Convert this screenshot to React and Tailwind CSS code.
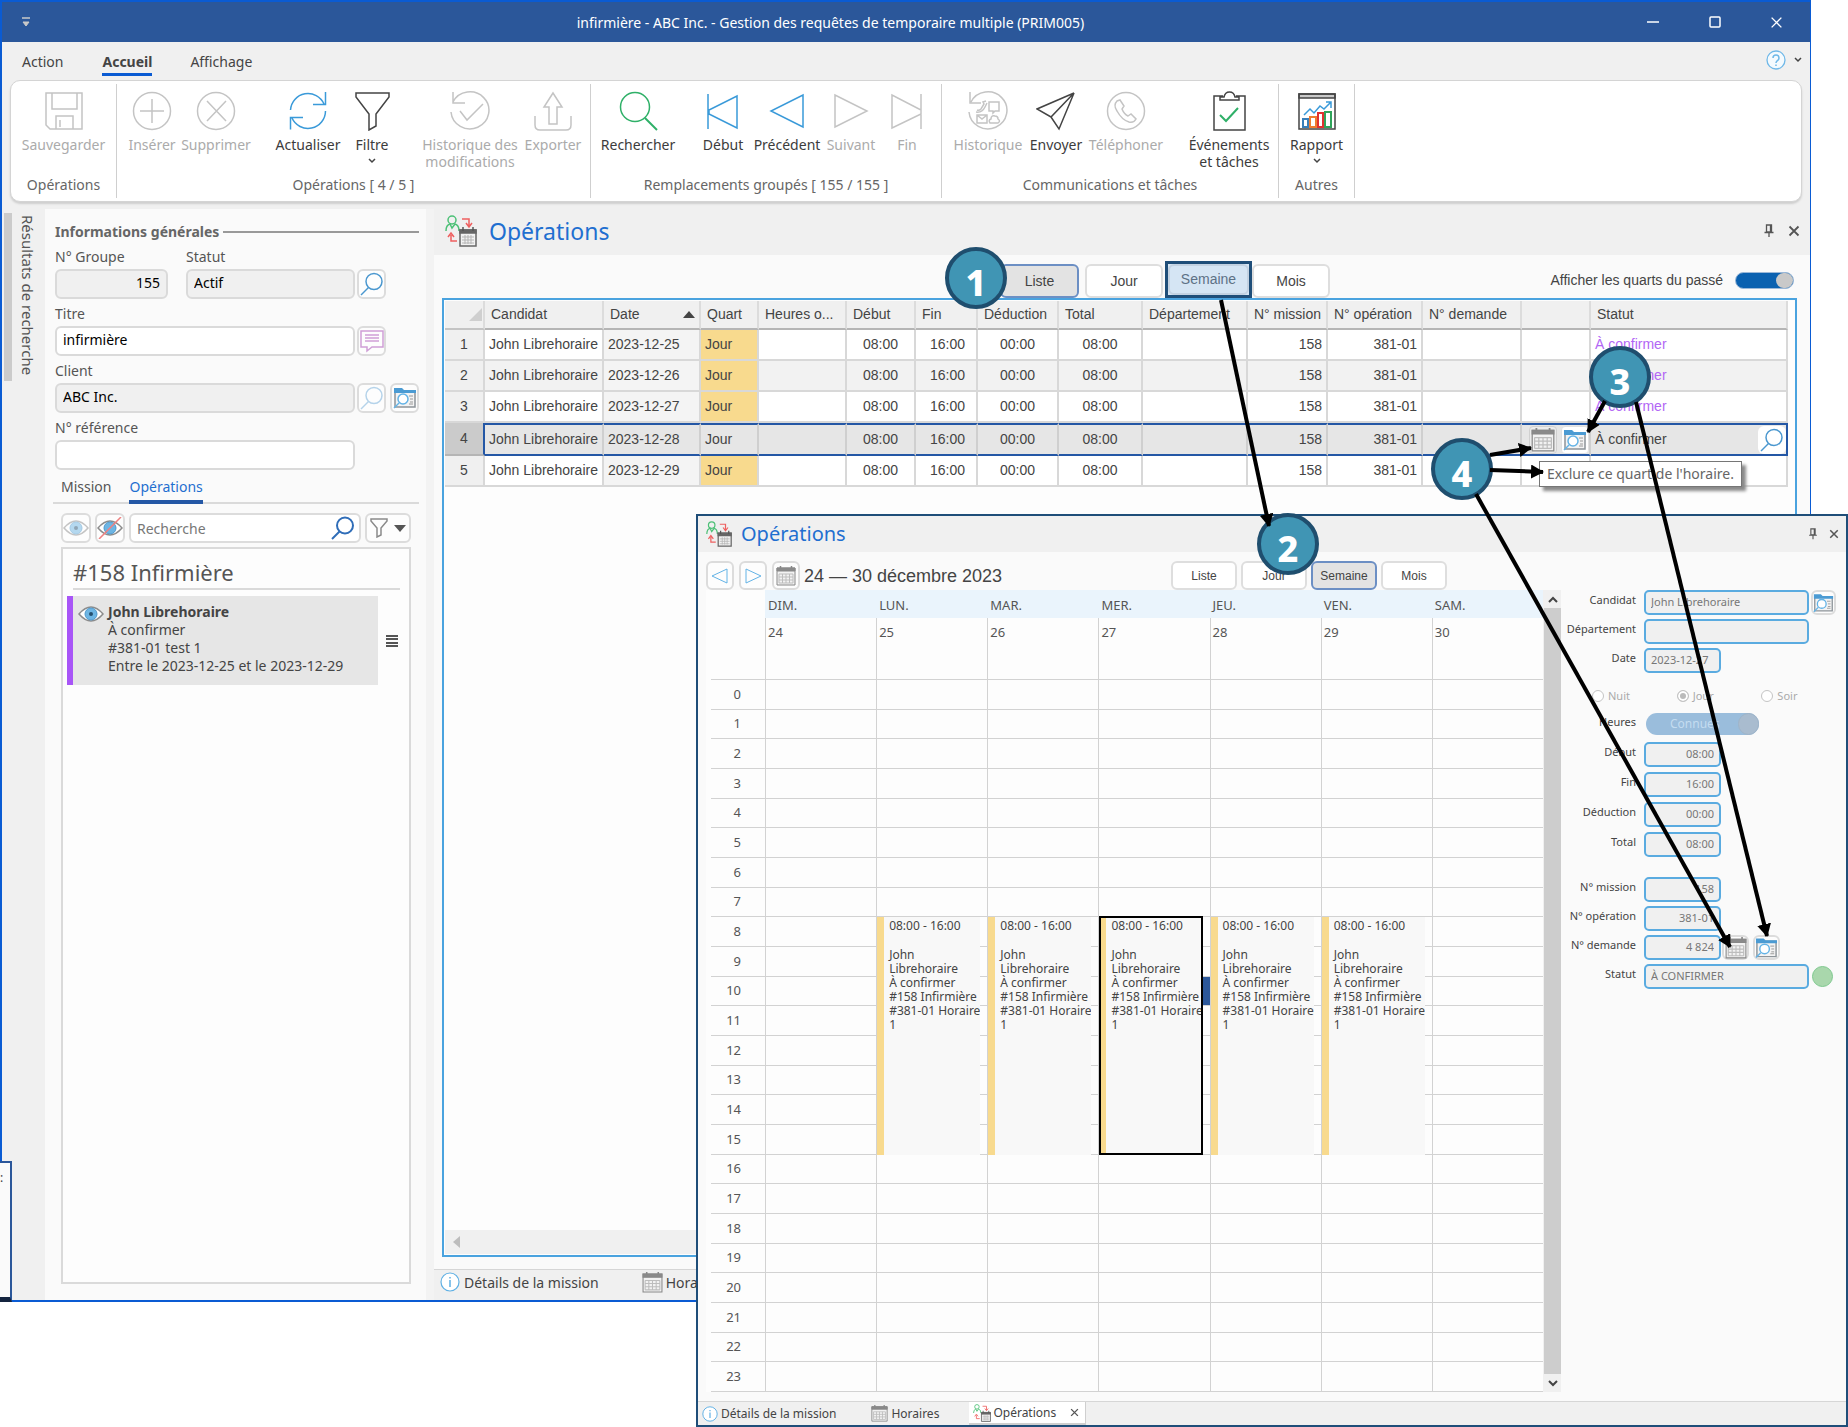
import React, { useState } from 'react';
import { clsx } from 'clsx';

const GREY = '#c4c4c4';
const BLUE = '#3a9ad9';
const DARK = '#444444';

/* ---------- Icons ---------- */

const RibbonIcon = ({ color = DARK, children }) => (
  <svg width="40" height="40" viewBox="0 0 40 40" fill="none" stroke={color} strokeWidth="1.5">
    {children}
  </svg>
);

const SaveIcon = () => (
  <RibbonIcon color={GREY}>
    <path d="M2 2h36v36H6l-4-4zM8 2v16h25V2M12 38V25h17v13M16 29v7" />
  </RibbonIcon>
);

const InsertIcon = () => (
  <RibbonIcon color={GREY}>
    <circle cx="20" cy="20" r="18.5" />
    <path d="M20 8v24M8 20h24" />
  </RibbonIcon>
);

const DeleteIcon = () => (
  <RibbonIcon color={GREY}>
    <circle cx="20" cy="20" r="18.5" />
    <path d="M11 10l19 20M30 10L11 30" />
  </RibbonIcon>
);

const RefreshIcon = () => (
  <RibbonIcon color={BLUE}>
    <path d="M2.500 19A17.500 17.500 0 0 1 36 13M37.500 1v12.500H25M37.500 20A17.500 17.500 0 0 1 4 27M2.500 38.500V26.500H15" />
  </RibbonIcon>
);

const FunnelIcon = () => (
  <RibbonIcon>
    <path d="M4 2h33v4L24 23v12l-7 4V23L4 6z" />
  </RibbonIcon>
);

const HistoryIcon = () => (
  <RibbonIcon color={GREY}>
    <path d="M3 11A19 18.500 0 1 1 1 21M3 1v11h12M10 20l7 9 16-16" />
  </RibbonIcon>
);

const ExportIcon = () => (
  <RibbonIcon color={GREY}>
    <path d="M20 2l9 14h-5v17h-8V16h-5zM2 25v9q0 5 5 5h26q5 0 5-5v-9" />
  </RibbonIcon>
);

const SearchBigIcon = () => (
  <RibbonIcon color="#2fb068">
    <circle cx="17" cy="16" r="14.500" />
    <path d="M27 27l12 12" strokeWidth="2" />
  </RibbonIcon>
);

const FirstIcon = () => (
  <RibbonIcon color={BLUE}>
    <path d="M5 3v35M34 5v32L6 23v-4z" />
  </RibbonIcon>
);

const PrevIcon = () => (
  <RibbonIcon color={BLUE}>
    <path d="M36 4v32L4 20z" />
  </RibbonIcon>
);

const NextIcon = () => (
  <RibbonIcon color={GREY}>
    <path d="M4 4v32l32-16z" />
  </RibbonIcon>
);

const LastIcon = () => (
  <RibbonIcon color={GREY}>
    <path d="M34 3v35M5 4v33l29-14v-4z" />
  </RibbonIcon>
);

const CommHistoryIcon = () => (
  <RibbonIcon color={GREY}>
    <path d="M3 11A19 18.500 0 1 1 1 21M2 1v11h11" />
    <path d="M21 11h10v9h-4l-2 2v-2h-4zM9 24h10v8H9zM9 24l5 4 5-4M22 32q-2-3 1-4 0-4 4-3 3 0 3 3 3 2 0 4zM9 19q2 1 4-1l3-5-1-2 3-1M8 21q6 1 9-5l2-4" />
  </RibbonIcon>
);

const SendIcon = () => (
  <RibbonIcon>
    <path d="M38 2L1 18l14 8zM38 2L23 38l-8-12z" />
  </RibbonIcon>
);

const PhoneIcon = () => (
  <RibbonIcon color={GREY}>
    <circle cx="20" cy="20" r="18.500" />
    <path d="M11 10q-4 4 0 10 5 9 12 11 5 1 7-3l-5-5-3 2q-4-2-6-7l2-3-4-6z" />
  </RibbonIcon>
);

const TasksIcon = () => (
  <RibbonIcon>
    <path d="M14 5H5v34h31V5h-9M11 9V6h4q1-5 5.500-5T26 6h4v3z" />
    <path d="M11 24l6 6 12-13" stroke="#2fb068" strokeWidth="2" />
  </RibbonIcon>
);

const ReportIcon = () => (
  <RibbonIcon>
    <path d="M2 3h36v4H2z" fill="#c9c9c9" />
    <path d="M2 3h36v35H2z" />
    <path d="M7 24l6-6 4 4 6-7 4 3 7-7M29 11h5v6" stroke={BLUE} strokeWidth="1.500" />
    <path d="M6 28h5v8H6z" stroke="#3a7fb9" strokeWidth="2" />
    <path d="M13 26h6v10h-6z" stroke="#ee7d31" strokeWidth="2" />
    <path d="M21 22h5v14h-5z" stroke="#e03131" strokeWidth="2" />
    <path d="M28 21h6v15h-6z" stroke="#2fa45a" strokeWidth="2" />
  </RibbonIcon>
);

const Chevron = () => (
  <svg width="8" height="6" viewBox="0 0 8 6" fill="none" stroke="#444" strokeWidth="1.5">
    <path d="M1 1l3 3 3-3" />
  </svg>
);

const CalendarIcon = ({ size = 20 }) => (
  <svg width={size} height={size} viewBox="0 0 20 20" fill="none" stroke="#888" strokeWidth="1">
    <path d="M1 2h18v17H1z" fill="#f2f2f2" />
    <path d="M1 2h18v3H1z" fill="#8a8a8a" />
    <path d="M4.500 0v3M15.500 0v3" strokeWidth="1.500" />
    <path d="M3 8h14M3 11h14M3 14h14M3 17h14M3 8v9M6.500 8v9M10 8v9M13.500 8v9M17 8v9" stroke="#bdbdbd" />
  </svg>
);

const FolderIcon = () => (
  <svg width="24" height="22" viewBox="0 0 24 22" fill="none">
    <path d="M2 4h20v16H2z" fill="#f3f3f3" stroke="#8d9499" strokeWidth="1.5" />
    <path d="M1 1h8l2 2h12v3H1z" fill="#4b9bd3" />
    <path d="M16 9h4M17 12h3M17 15h3M16 17h4" stroke="#999" />
    <circle cx="10" cy="12" r="5" fill="#fff" stroke="#63b3e6" strokeWidth="1.5" />
    <path d="M6 16l-5 5" stroke="#63b3e6" strokeWidth="1.5" />
  </svg>
);

const Magnifier = ({ color = '#4a97cf', width = 1.5 }) => (
  <svg width="24" height="24" viewBox="0 0 24 24" fill="none" stroke={color} strokeWidth={width}>
    <circle cx="14" cy="9.500" r="8" />
    <path d="M8.500 15.500L1 23" />
  </svg>
);

const CommentIcon = () => (
  <svg width="24" height="24" viewBox="0 0 24 24" fill="none" stroke="#cf9fd6" strokeWidth="1.5">
    <path d="M1 2h22v16H12l-5 4v-4H1z" />
    <path d="M5 6h14M5 9h14M5 12h14" />
  </svg>
);

const EyeIcon = ({ faded, crossed }) => (
  <svg width="26" height="22" viewBox="0 0 26 22" fill="none" className={faded ? 'opacity-50' : ''}>
    <path d="M1 11Q13-3 25 11 13 25 1 11z" fill="#fff" stroke="#8c8c8c" strokeWidth="1.5" />
    <circle cx="13" cy="11" r="6" fill="#6db5e3" stroke="#4e98cc" />
    {!crossed && <circle cx="13" cy="11" r="2" fill="#24506f" />}
    {crossed && <path d="M2 22L24 0" stroke="#ee8080" strokeWidth="1.5" />}
  </svg>
);

const OperationsIcon = ({ size = 32 }) => (
  <svg width={size} height={size} viewBox="0 0 32 32" fill="none" strokeWidth="1.5">
    <circle cx="7" cy="5" r="4" stroke="#4cc076" />
    <path d="M1 16q0-6 4-7l2 4 3-4q4 1 4 7" stroke="#4cc076" />
    <path d="M17 4h7v7M21 8l3 4 3-4M12 26H6v-6M3 22l3-4 3 4" stroke="#ee5f5f" />
    <path d="M15 15h16v16H15z" fill="#f2f2f2" stroke="#666" />
    <path d="M15 15h16v3H15z" fill="#666" stroke="#666" />
    <path d="M18 12v4M28 12v4" stroke="#555" />
    <path d="M17 22h12M17 25h12M17 28h12M20 20v9M23 20v9M26 20v9" stroke="#b5b5b5" strokeWidth="1" />
  </svg>
);

const InfoIcon = ({ size = 20 }) => (
  <svg width={size} height={size} viewBox="0 0 20 20" fill="none" stroke="#5fb0e4" strokeWidth="1.200">
    <circle cx="10" cy="10" r="9" fill="#fff" />
    <path d="M10 8v7M10 5v1.500" strokeWidth="1.500" />
  </svg>
);

const HelpIcon = () => (
  <svg width="20" height="20" viewBox="0 0 20 20" fill="none" stroke="#6fb8e8" strokeWidth="1.300">
    <circle cx="10" cy="10" r="9" fill="#f4fafe" />
    <path d="M7 8q0-3 3-3t3 3q0 2-2 3-1 1-1 2M10 14.500V16" strokeWidth="1.500" />
  </svg>
);

const PinIcon = ({ size = 14 }) => (
  <svg width={size} height={size} viewBox="0 0 14 14" fill="none" stroke="#555" strokeWidth="1.300">
    <path d="M4.500 1h5v7h-5zM8.500 1v7M2.500 8.500h9M7 8.500V13" />
  </svg>
);

const CrossIcon = ({ size = 12, color = '#555', width = 1.8 }) => (
  <svg width={size} height={size} viewBox="0 0 12 12" fill="none" stroke={color} strokeWidth={width}>
    <path d="M1.500 1.500l9 9M10.500 1.500l-9 9" />
  </svg>
);

/* ---------- Ribbon ---------- */

const ribbonGroups = [
  {
    title: 'Opérations',
    className: 'w-[105px] justify-center',
    items: [{ label: 'Sauvegarder', icon: <SaveIcon />, disabled: true, className: 'w-[90px]' }],
  },
  {
    title: 'Opérations [ 4 / 5 ]',
    className: 'w-[473px] pl-[7px]',
    items: [
      { label: 'Insérer', icon: <InsertIcon />, disabled: true, className: 'w-[56px]' },
      { label: 'Supprimer', icon: <DeleteIcon />, disabled: true, className: 'w-[72px]' },
      { label: 'Actualiser', icon: <RefreshIcon />, className: 'ml-5 w-[72px]' },
      { label: 'Filtre', icon: <FunnelIcon />, menu: true, className: 'w-[56px]' },
      { label: 'Historique des', label2: 'modifications', icon: <HistoryIcon />, disabled: true, className: 'ml-[14px] w-[112px]' },
      { label: 'Exporter', icon: <ExportIcon />, disabled: true, className: 'w-[54px]' },
    ],
  },
  {
    title: 'Remplacements groupés [ 155 / 155 ]',
    className: 'w-[350px] pl-[5px]',
    items: [
      { label: 'Rechercher', icon: <SearchBigIcon />, className: 'w-[84px]' },
      { label: 'Début', icon: <FirstIcon />, className: 'ml-[17px] w-[52px]' },
      { label: 'Précédent', icon: <PrevIcon />, className: 'w-[76px]' },
      { label: 'Suivant', icon: <NextIcon />, disabled: true, className: 'w-[52px]' },
      { label: 'Fin', icon: <LastIcon />, disabled: true, className: 'w-[60px]' },
    ],
  },
  {
    title: 'Communications et tâches',
    className: 'w-[336px] pl-2',
    items: [
      { label: 'Historique', icon: <CommHistoryIcon />, disabled: true, className: 'w-[76px]' },
      { label: 'Envoyer', icon: <SendIcon />, className: 'w-[60px]' },
      { label: 'Téléphoner', icon: <PhoneIcon />, disabled: true, className: 'w-[80px]' },
      { label: 'Événements', label2: 'et tâches', icon: <TasksIcon />, className: 'ml-[17px] w-[92px]' },
    ],
  },
  {
    title: 'Autres',
    className: 'w-[75px] justify-center',
    items: [{ label: 'Rapport', icon: <ReportIcon />, menu: true, className: 'w-[70px]' }],
  },
];

const RibbonItem = ({ item }) => (
  <button
    type="button"
    disabled={item.disabled}
    className={clsx(
      'flex shrink-0 flex-col items-center whitespace-nowrap leading-[17px]',
      item.disabled ? 'text-[#ababab]' : 'text-[#3c3c3c]',
      item.className
    )}
  >
    {item.icon}
    <span className="mt-[5px]">{item.label}</span>
    {item.label2 && <span>{item.label2}</span>}
    {item.menu && <span className="mt-[5px]"><Chevron /></span>}
  </button>
);

const Ribbon = () => (
  <div className="mx-2 flex h-[122px] rounded-[10px] border border-[#d4d4d4] bg-white py-[3px] shadow-[0_2px_2px_#cfcfcf]">
    {ribbonGroups.map((group) => (
      <section key={group.title} className="flex flex-col border-r border-[#cfcfcf] pt-[7px]">
        <div className={clsx('flex flex-1 items-start', group.className)}>
          {group.items.map((item) => <RibbonItem key={item.label} item={item} />)}
        </div>
        <h2 className="pb-[3px] text-center leading-5 text-[#666]">{group.title}</h2>
      </section>
    ))}
  </div>
);

/* ---------- Left panel ---------- */

const IconButton = ({ label, className, children }) => (
  <button
    type="button"
    aria-label={label}
    className={clsx('flex shrink-0 items-center justify-center rounded-md border-2 border-[#dcdcdc] bg-[#fdfdfd]', className)}
  >
    {children}
  </button>
);

const Field = ({ id, label, value, readOnly, className, inputClass, children }) => (
  <div className={clsx('flex flex-col gap-[3px]', className)}>
    <label htmlFor={id} className="h-[18px] leading-[18px] text-[#555]">{label}</label>
    <div className="flex gap-[2px]">
      <input
        id={id}
        defaultValue={value}
        readOnly={readOnly}
        className={clsx(
          'h-[30px] min-w-0 rounded-md border-2 border-[#dadada] px-[6px] pb-1 text-black',
          readOnly ? 'bg-[#f0f0f0]' : 'bg-white',
          inputClass
        )}
      />
      {children}
    </div>
  </div>
);

const SidePanel = () => {
  const [tab, setTab] = useState('Opérations');

  return (
    <aside className="flex w-[381px] shrink-0 flex-col bg-[#fafafa] pr-[7px] pb-4 pl-2">
      <div className="flex items-center gap-1 pt-[14px] pl-[2px]">
        <h2 className="leading-[18px] font-bold text-[#666]">Informations générales</h2>
        <div className="h-[2px] flex-1 bg-[#999]" />
      </div>

      <div className="mt-[7px] flex flex-col gap-[6px] pl-[2px]">
        <div className="flex gap-[18px]">
          <Field id="groupe" label="N° Groupe" value="155" readOnly inputClass="w-[113px] text-right" />
          <Field id="statut" label="Statut" value="Actif" readOnly inputClass="w-[169px]">
            <IconButton label="Chercher un statut" className="h-[30px] w-[29px]"><Magnifier /></IconButton>
          </Field>
        </div>
        <Field id="titre" label="Titre" value="infirmière" inputClass="w-[300px]">
          <IconButton label="Commentaire" className="h-[30px] w-[29px]"><CommentIcon /></IconButton>
        </Field>
        <Field id="client" label="Client" value="ABC Inc." readOnly inputClass="w-[300px]">
          <IconButton label="Chercher un client" className="h-[30px] w-[29px]"><Magnifier color="#b5d3ea" /></IconButton>
          <IconButton label="Ouvrir le client" className="ml-[2px] h-[30px] w-[29px]"><FolderIcon /></IconButton>
        </Field>
        <Field id="reference" label="N° référence" inputClass="w-[300px]" />
      </div>

      <div className="mt-[6px] flex gap-[18px] border-b-2 border-[#dadada] pl-2">
        {['Mission', 'Opérations'].map((name) => (
          <button
            key={name}
            type="button"
            onClick={() => setTab(name)}
            className={clsx(
              '-mb-[2px] border-b-4 pb-[2px] leading-[22px]',
              tab === name ? 'border-[#2457a5] text-[#1f6fd0]' : 'border-transparent text-[#555]'
            )}
          >
            {name}
          </button>
        ))}
      </div>

      <div className="mt-[9px] flex gap-1 pr-2 pl-2">
        <IconButton label="Afficher" className="h-[30px] w-[30px]"><EyeIcon faded /></IconButton>
        <IconButton label="Masquer" className="h-[30px] w-[30px]"><EyeIcon crossed /></IconButton>
        <label className="flex h-[30px] min-w-0 flex-1 items-center rounded-md border-2 border-[#dcdcdc] bg-white pr-1 pl-[6px]">
          <input placeholder="Recherche" className="min-w-0 flex-1 placeholder:text-[#777]" />
          <Magnifier color="#2f6db8" width={2} />
        </label>
        <IconButton label="Filtrer" className="h-[30px] w-[46px] gap-[6px]">
          <svg width="18" height="20" viewBox="0 0 18 20" fill="none" stroke="#8a8a8a" strokeWidth="1.5">
            <path d="M1 1h16v2l-6 7v7l-4 2v-9L1 3z" />
          </svg>
          <svg width="12" height="7" viewBox="0 0 12 7"><path d="M0 0h12L6 7z" fill="#555" /></svg>
        </IconButton>
      </div>

      <div className="mt-1 mr-2 ml-2 flex-1 border-2 border-[#dadada] bg-[#fdfdfd]">
        <h3 className="mt-[7px] mr-[9px] ml-[10px] border-b-2 border-[#dadada] text-[22px] leading-8 text-[#555]">#158 Infirmière</h3>
        <div className="mt-[6px] ml-1 flex items-center gap-2 text-[#444]">
          <div className="flex h-[89px] w-[311px] gap-1 border-l-[6px] border-[#a855f7] bg-[#e6e6e6] pt-[7px] pl-[5px]">
            <span className="h-[22px] w-[26px] shrink-0"><EyeIcon /></span>
            <div className="leading-[18px] whitespace-nowrap">
              <p className="font-bold">John Librehoraire</p>
              <p>À confirmer</p>
              <p>#381-01 test 1</p>
              <p>Entre le 2023-12-25 et le 2023-12-29</p>
            </div>
          </div>
          <svg width="12" height="12" viewBox="0 0 12 12" stroke="#555" strokeWidth="2">
            <path d="M0 1h12M0 4h12M0 8h12M0 11h12" />
          </svg>
        </div>
      </div>
    </aside>
  );
};

/* ---------- Operations list ---------- */

const columns = [
  { label: 'Candidat', width: 'w-[119px]' },
  { label: 'Date', width: 'w-[97px]', sorted: true },
  { label: 'Quart', width: 'w-[58px]' },
  { label: 'Heures o...', width: 'w-[88px]' },
  { label: 'Début', width: 'w-[69px]' },
  { label: 'Fin', width: 'w-[62px]' },
  { label: 'Déduction', width: 'w-[81px]' },
  { label: 'Total', width: 'w-[84px]' },
  { label: 'Département', width: 'w-[105px]' },
  { label: 'N° mission', width: 'w-[80px]' },
  { label: 'N° opération', width: 'w-[95px]' },
  { label: 'N° demande', width: 'w-[99px]' },
  { label: '', width: 'w-[69px]' },
  { label: 'Statut', width: '' },
];

const rows = ['2023-12-25', '2023-12-26', '2023-12-27', '2023-12-28', '2023-12-29'];
const SELECTED_ROW = 3;

const ViewButton = ({ active, highlighted, className, children }) => (
  <button
    type="button"
    aria-pressed={active}
    className={clsx(
      'rounded-md border-2',
      highlighted && 'border-[#c3d2e2] bg-[#d5e5f4] text-[#5d7186]',
      active && 'border-[#6c8fc4] bg-[#e3e3e3] text-[#444]',
      !highlighted && !active && 'border-[#dedede] bg-white text-[#444]',
      className
    )}
  >
    {children}
  </button>
);

const OperationRow = ({ index, date }) => {
  const selected = index === SELECTED_ROW;
  const line = clsx(
    'overflow-hidden border-r-2 px-1',
    selected ? 'border-y-2 border-y-[#2457a5] bg-[#e6e6e6]' : 'border-b-2 border-[#d8d8d8]'
  );
  const stripe = index % 2 ? 'bg-[#f2f2f2]' : 'bg-white';
  const cell = clsx(line, selected ? 'border-r-[#cfcfcf]' : stripe);

  return (
    <tr className={selected ? 'h-[33px]' : 'h-[31px]'}>
      <th
        scope="row"
        className={clsx(
          'border-r-2 border-b-2 text-center font-normal',
          selected ? 'border-r-[#2457a5] border-b-[#b5b5b5] bg-[#cbcbcb]' : 'border-[#d8d8d8] bg-[#f0f0f0]'
        )}
      >
        {index + 1}
      </th>
      <td className={cell}>John Librehoraire</td>
      <td className={clsx(line, selected ? 'border-r-[#cfcfcf]' : 'bg-[#f4f4f4]')}>{date}</td>
      <td className={clsx(line, selected ? 'border-r-[#cfcfcf]' : 'bg-[#f8da8e]')}>Jour</td>
      <td className={cell} />
      <td className={clsx(cell, 'text-right')}><span className="pr-3">08:00</span></td>
      <td className={clsx(cell, 'text-right')}><span className="pr-[7px]">16:00</span></td>
      <td className={clsx(cell, 'text-center')}>00:00</td>
      <td className={clsx(cell, 'text-center')}>08:00</td>
      <td className={cell} />
      <td className={clsx(cell, 'text-right')}>158</td>
      <td className={clsx(cell, 'text-right')}>381-01</td>
      <td className={cell} />
      <td className={cell}>
        {selected && (
          <div className="-mr-1 flex justify-end gap-1">
            <button type="button" aria-label="Exclure ce quart" className="flex h-7 w-7 items-center justify-center rounded border border-[#d0d0d0] bg-[#ececec]">
              <CalendarIcon size={24} />
            </button>
            <button type="button" aria-label="Ouvrir la demande" className="flex h-7 w-7 items-center justify-center rounded border border-[#e0e0e0] bg-white">
              <FolderIcon />
            </button>
          </div>
        )}
      </td>
      <td className={clsx(line, selected ? 'border-r-[#2457a5]' : [stripe, 'text-[#b266f5]'])}>
        <div className="flex items-center justify-between">
          À confirmer
          {selected && (
            <button type="button" aria-label="Chercher un statut" className="-mr-1 flex h-7 w-7 items-center justify-center rounded-md bg-white">
              <Magnifier />
            </button>
          )}
        </div>
      </td>
    </tr>
  );
};

const OperationsList = () => (
  <main className="flex min-w-0 flex-1 flex-col">
    <header className="flex h-[46px] items-center pr-[10px] pb-[2px] pl-[11px]">
      <OperationsIcon />
      <h1 className="ml-3 text-[23px] leading-8 text-[#1f6fd0]">Opérations</h1>
      <button type="button" aria-label="Épingler" className="ml-auto"><PinIcon /></button>
      <button type="button" aria-label="Fermer" className="ml-3"><CrossIcon /></button>
    </header>

    <div className="flex min-h-0 flex-1 flex-col bg-[#fafafa] pr-[13px] pb-3 pl-2 font-['Liberation_Sans',Arial,sans-serif] text-[#444]">
      <div className="flex items-end pt-[6px]">
        <div className="flex items-end pl-[558px]">
          <ViewButton active className="h-[34px] w-[79px]">Liste</ViewButton>
          <ViewButton className="mr-[2px] ml-[6px] h-[34px] w-[78px]">Jour</ViewButton>
          <div className="border-[3px] border-[#1f4e79] bg-[#d5e5f4]">
            <ViewButton highlighted className="h-[31px] w-[81px]">Semaine</ViewButton>
          </div>
          <ViewButton className="h-[34px] w-[78px]">Mois</ViewButton>
        </div>
        <label className="mr-[3px] mb-[7px] ml-auto flex items-center gap-3">
          Afficher les quarts du passé
          <input
            type="checkbox"
            defaultChecked
            className="h-[17px] w-[59px] appearance-none rounded-full border border-[#9bb8d8] bg-[#0a61b0] before:ml-auto before:block before:h-[15px] before:w-[17px] before:rounded-full before:bg-[#c9c9c9]"
          />
        </label>
      </div>

      <div className="flex flex-1 flex-col border-2 border-[#4aa3df] bg-[#fdfdfd] p-px">
        <table className="w-[calc(100%-6px)] table-fixed border-separate border-spacing-0">
          <thead>
            <tr className="h-[29px] bg-[#f0f0f0]">
              <th aria-label="Ligne" className="w-[40px] border-r-2 border-b-2 border-r-[#dcdcdc] border-b-[#c4c4c4]">
                <svg width="14" height="14" viewBox="0 0 14 14" className="ml-auto"><path d="M13 0v13H0z" fill="#cfcfcf" /></svg>
              </th>
              {columns.map((col) => (
                <th
                  key={col.label}
                  className={clsx('border-r-2 border-b-2 border-r-[#dcdcdc] border-b-[#b5b5b5] pl-[6px] text-left font-normal whitespace-nowrap', col.width)}
                >
                  {col.sorted ? (
                    <span className="flex items-center justify-between pr-1">
                      {col.label}
                      <svg width="12" height="7" viewBox="0 0 12 7"><path d="M0 7h12L6 0z" fill="#444" /></svg>
                    </span>
                  ) : col.label}
                </th>
              ))}
            </tr>
          </thead>
          <tbody>
            {rows.map((date, i) => <OperationRow key={date} index={i} date={date} />)}
          </tbody>
        </table>
        <div className="mt-auto flex h-6 items-center bg-[#f0f0f0] pl-2">
          <svg width="7" height="12" viewBox="0 0 7 12"><path d="M7 0v12L0 6z" fill="#bdbdbd" /></svg>
        </div>
      </div>
    </div>

    <nav className="flex h-[31px] items-center border-t border-[#d6d6d6] pb-[6px] pl-[6px] text-[#444]">
      <a href="#mission" className="flex items-center gap-1"><InfoIcon />Détails de la mission</a>
      <a href="#horaires" className="ml-[43px] flex items-center gap-[3px]"><CalendarIcon size={21} />Horaires</a>
    </nav>
  </main>
);

/* ---------- Week view window ---------- */

const days = [
  ['DIM.', 24], ['LUN.', 25], ['MAR.', 26], ['MER.', 27], ['JEU.', 28], ['VEN.', 29], ['SAM.', 30],
];
const hours = Array.from({ length: 24 }, (_, h) => h);

const WeekCalendar = () => (
  <div className="grid min-w-0 flex-1 grid-cols-[59px_repeat(7,minmax(0,1fr))] grid-rows-[28px_62px_repeat(24,minmax(0,1fr))] bg-[#fdfdfd] text-[13px] text-[#555]">
    <div />
    {days.map(([name]) => (
      <div key={name} className="bg-[#eaf4fc] pl-[3px] leading-[30px]">{name}</div>
    ))}
    <div className="ml-[5px] border-b border-[#d2d2d2]" />
    {days.map(([name, num]) => (
      <div key={name} className="border-b border-l border-[#d2d2d2] pt-1 pl-[2px] leading-5">{num}</div>
    ))}
    {hours.map((h) => (
      <React.Fragment key={h}>
        <div className="ml-[5px] flex items-center justify-end border-b border-[#d2d2d2] pr-6" style={{ gridRow: h + 3, gridColumn: 1 }}>{h}</div>
        {days.map(([name], d) => (
          <div
            key={name}
            className={clsx('border-b border-l border-[#d2d2d2]', name === 'MER.' && h === 10 && 'bg-[#2b579a]')}
            style={{ gridRow: h + 3, gridColumn: d + 2 }}
          />
        ))}
      </React.Fragment>
    ))}
    {[1, 2, 3, 4, 5].map((d) => (
      <div
        key={d}
        className={clsx(
          'z-10 mr-[7px] ml-px flex overflow-hidden bg-[#f8f8f8] text-[12px] leading-[14px] whitespace-nowrap text-[#444]',
          d === 3 && '-mt-px border-2 border-black'
        )}
        style={{ gridRow: '11 / span 8', gridColumn: d + 2 }}
      >
        <div className={clsx('shrink-0 bg-[#f8da8e]', d === 3 ? 'mr-[5px] w-[5px]' : 'mr-[5px] w-[7px]')} />
        <div className={d === 3 ? 'pt-px' : 'pt-[2px]'}>
          <p>08:00 - 16:00</p>
          <p className="mt-[15px]">John</p>
          <p>Librehoraire</p>
          <p>À confirmer</p>
          <p>#158 Infirmière</p>
          <p>#381-01 Horaire</p>
          <p>1</p>
        </div>
      </div>
    ))}
  </div>
);

const DetailField = ({ id, label, value, wide, right, children }) => (
  <div className="flex items-center">
    <label htmlFor={id} className="w-[75px] shrink-0 pb-1 text-right whitespace-nowrap">{label}</label>
    <input
      id={id}
      readOnly
      defaultValue={value}
      className={clsx(
        'ml-2 h-[25px] min-w-0 rounded-[5px] border-2 border-[#5aabe0] bg-[#f0f0f0] px-[5px] pb-[2px] text-[#777]',
        wide ? 'w-[165px]' : 'w-[77px]',
        right && 'text-right'
      )}
    />
    {children}
  </div>
);

const DetailForm = () => (
  <form className="w-[285px] shrink-0 text-[11px] text-[#444]">
    <div className="flex flex-col gap-1">
      <DetailField id="d-candidat" label="Candidat" value="John Librehoraire" wide>
        <IconButton label="Ouvrir le candidat" className="ml-[2px] h-[25px] w-[25px]"><FolderIcon /></IconButton>
      </DetailField>
      <DetailField id="d-departement" label="Département" wide />
      <DetailField id="d-date" label="Date" value="2023-12-27" />
    </div>
    <div className="mt-[13px] flex h-5 items-center pl-[31px] text-[#aaa]">
      {['Nuit', 'Jour', 'Soir'].map((name) => (
        <label key={name} className="flex w-[85px] items-center gap-1">
          <input
            type="radio"
            name="quart"
            disabled
            defaultChecked={name === 'Jour'}
            className="h-3 w-3 appearance-none rounded-full border border-[#c4c4c4] bg-white checked:bg-[#bbb] checked:shadow-[inset_0_0_0_2px_#fff]"
          />
          {name}
        </label>
      ))}
    </div>
    <div className="mt-[7px] flex items-center">
      <span id="heures-label" className="w-[75px] pb-1 text-right">Heures</span>
      <button type="button" role="switch" aria-checked="true" aria-labelledby="heures-label" className="ml-[10px] flex h-[22px] w-[113px] items-center justify-between rounded-full bg-[#9abddc] pl-6 text-[12px] text-[#c4dcf0]">
        Connues
        <span className="h-[22px] w-[21px] rounded-full border border-[#9fb4c8] bg-[#a9bccf]" />
      </button>
    </div>
    <div className="mt-[7px] flex flex-col gap-[5px]">
      <DetailField id="d-debut" label="Début" value="08:00" right />
      <DetailField id="d-fin" label="Fin" value="16:00" right />
      <DetailField id="d-deduction" label="Déduction" value="00:00" right />
      <DetailField id="d-total" label="Total" value="08:00" right />
    </div>
    <div className="mt-5 flex flex-col gap-1">
      <DetailField id="d-mission" label="N° mission" value="158" right />
      <DetailField id="d-operation" label="N° opération" value="381-01" right />
      <DetailField id="d-demande" label="N° demande" value="4 824" right>
        <IconButton label="Exclure ce quart" className="ml-px h-[25px] w-[27px]"><CalendarIcon size={22} /></IconButton>
        <IconButton label="Ouvrir la demande" className="ml-1 h-[25px] w-[27px]"><FolderIcon /></IconButton>
      </DetailField>
      <DetailField id="d-statut" label="Statut" value="À CONFIRMER" wide>
        <span className="ml-[3px] h-[21px] w-[21px] rounded-full border border-[#7fc98f] bg-[#a9d7ac]" />
      </DetailField>
    </div>
  </form>
);

const WeekWindow = () => (
  <div className="absolute top-[514px] right-0 bottom-0 left-[696px] flex flex-col border-2 border-[#1f4e79] bg-[#fafafa]">
    <header className="flex h-9 items-center bg-[#f0f0f0] pr-[7px] pl-2">
      <OperationsIcon size={26} />
      <h2 className="ml-[9px] text-[20px] leading-7 text-[#1f6fd0]">Opérations</h2>
      <button type="button" aria-label="Épingler" className="ml-auto"><PinIcon size={12} /></button>
      <button type="button" aria-label="Fermer" className="ml-[10px]"><CrossIcon size={10} /></button>
    </header>

    <div className="flex items-center pt-[9px] pl-2 font-['Liberation_Sans',Arial,sans-serif] text-[12px] text-[#444]">
      <IconButton label="Semaine précédente" className="h-[29px] w-[28px]">
        <svg width="18" height="16" viewBox="0 0 18 16" fill="none" stroke="#63b3e6"><path d="M16 1v14L1 8z" /></svg>
      </IconButton>
      <IconButton label="Semaine suivante" className="ml-[5px] h-[29px] w-[28px]">
        <svg width="18" height="16" viewBox="0 0 18 16" fill="none" stroke="#63b3e6"><path d="M2 1v14l15-7z" /></svg>
      </IconButton>
      <IconButton label="Choisir une date" className="ml-[5px] h-[29px] w-[28px]"><CalendarIcon /></IconButton>
      <span className="ml-1 w-[367px] text-[18px] leading-6">24 — 30 décembre 2023</span>
      <div className="flex gap-1">
        <ViewButton className="h-[29px] w-[66px]">Liste</ViewButton>
        <ViewButton className="h-[29px] w-[66px]">Jour</ViewButton>
        <ViewButton active className="h-[29px] w-[66px]">Semaine</ViewButton>
        <ViewButton className="h-[29px] w-[66px]">Mois</ViewButton>
      </div>
    </div>

    <div className="flex min-h-0 flex-1 pl-2">
      <WeekCalendar />
      <div className="flex w-[18px] flex-col items-center bg-[#f0f0f0] pl-px">
        <span className="flex h-[18px] items-center">
          <svg width="10" height="7" viewBox="0 0 10 7" fill="none" stroke="#444" strokeWidth="2"><path d="M1 6l4-4 4 4" /></svg>
        </span>
        <div className="w-full flex-1 bg-[#cdcdcd]" />
        <span className="flex h-[18px] items-center">
          <svg width="10" height="7" viewBox="0 0 10 7" fill="none" stroke="#444" strokeWidth="2"><path d="M1 1l4 4 4-4" /></svg>
        </span>
      </div>
      <DetailForm />
    </div>

    <nav className="mt-[9px] flex h-6 items-center border-t border-[#d6d6d6] bg-[#f0f0f0] pl-1 text-[12px] text-[#444]">
      <a href="#mission" className="flex items-center gap-[3px]"><InfoIcon size={16} />Détails de la mission</a>
      <a href="#horaires" className="ml-[35px] flex items-center gap-[3px]"><CalendarIcon size={17} />Horaires</a>
      <div className="ml-[30px] flex h-[23px] items-center border-r border-b-2 border-[#cfcfcf] bg-white pr-[6px] pl-1">
        <a href="#operations" className="flex items-center gap-[2px]"><OperationsIcon size={18} />Opérations</a>
        <button type="button" aria-label="Fermer l'onglet" className="ml-[14px]"><CrossIcon size={9} /></button>
      </div>
    </nav>
  </div>
);

/* ---------- Callouts ---------- */

const Badge = ({ number, className }) => (
  <div className={clsx('absolute flex h-[62px] w-[62px] items-center justify-center rounded-full border-4 border-[#1f4e6e] bg-[#4095b4] pt-[10px] text-[36px] leading-none font-extrabold text-white', className)}>
    {number}
  </div>
);

const arrows = [
  [1221, 300, 1269, 526],
  [1605, 401, 1588, 432],
  [1636, 402, 1767, 936],
  [1490, 455, 1531, 448],
  [1490, 470, 1543, 472],
  [1476, 494, 1730, 947],
];

const Callouts = () => (
  <>
    <Badge number={1} className="top-[247px] left-[945px]" />
    <Badge number={2} className="top-[513px] left-[1257px]" />
    <Badge number={3} className="top-[346px] left-[1589px]" />
    <Badge number={4} className="top-[438px] left-[1431px]" />
    <svg width="1848" height="1427" viewBox="0 0 1848 1427" className="pointer-events-none absolute top-0 left-0">
      <defs>
        <marker id="head" markerUnits="userSpaceOnUse" markerWidth="14" markerHeight="14" refX="12" refY="7" orient="auto">
          <path d="M0 0l13 7-13 7z" />
        </marker>
      </defs>
      {arrows.map(([x1, y1, x2, y2]) => (
        <line key={`${x1}-${y2}`} x1={x1} y1={y1} x2={x2} y2={y2} stroke="#000" strokeWidth="4" markerEnd="url(#head)" />
      ))}
    </svg>
  </>
);

/* ---------- Page ---------- */

const App = () => (
  <div className="relative flex min-h-screen flex-col overflow-hidden bg-white pr-[37px] pb-[125px] font-['Noto_Sans','Open_Sans',sans-serif] text-[14px]">
    <div className="flex flex-1 flex-col border-t-2 border-r border-b-2 border-l-2 border-[#0a5bd3] bg-[#f0f0f0]">
      <header className="flex h-10 items-center bg-[#2b579a] pr-[27px] pl-5 text-white">
        <svg width="8" height="10" viewBox="0 0 8 10" stroke="#c9c9c9"><path d="M0 1h8" strokeWidth="1.500" /><path d="M1 5h6L4 9z" fill="#c9c9c9" /></svg>
        <span className="flex-1 pr-4 pl-0 text-center">infirmière - ABC Inc. - Gestion des requêtes de temporaire multiple (PRIM005)</span>
        <button type="button" aria-label="Réduire" className="w-3"><svg width="12" height="12" viewBox="0 0 12 12" stroke="#fff" strokeWidth="1.500"><path d="M0 6h12" /></svg></button>
        <button type="button" aria-label="Agrandir" className="ml-[50px]"><svg width="12" height="12" viewBox="0 0 12 12" fill="none" stroke="#fff" strokeWidth="1.500"><rect x="1" y="1" width="10" height="10" rx="1" /></svg></button>
        <button type="button" aria-label="Fermer" className="ml-[49px]"><CrossIcon size={13} color="#fff" width={1.3} /></button>
      </header>

      <nav className="flex h-[38px] items-start pt-2 pr-2 pl-5 text-[#444]">
        <a href="#action" className="border-b-[3px] border-transparent leading-[23px]">Action</a>
        <a href="#accueil" className="ml-[39px] border-b-[3px] border-[#0a5bd3] leading-[23px] font-bold">Accueil</a>
        <a href="#affichage" className="ml-[38px] border-b-[3px] border-transparent leading-[23px]">Affichage</a>
        <button type="button" aria-label="Aide" className="ml-auto"><HelpIcon /></button>
        <span className="mt-[7px] ml-2"><Chevron /></span>
      </nav>

      <Ribbon />

      <div className="mt-[7px] flex min-h-0 flex-1">
        <div className="flex w-[43px] shrink-0 items-start pt-1 pl-[2px]">
          <div className="h-[168px] w-2 bg-[#cbcbcb]" />
          <button type="button" className="ml-[6px] pt-[2px] text-[15px] leading-5 text-[#555] [writing-mode:vertical-rl]">Résultats de recherche</button>
        </div>
        <SidePanel />
        <div className="w-2 shrink-0 bg-[#f3f3f3]" />
        <OperationsList />
      </div>
    </div>

    {/* Edge of the window behind */}
    <div className="absolute bottom-[125px] left-0 flex h-[141px] w-3 flex-col border-t-2 border-r-2 border-b-[5px] border-[#2b579a] border-b-[#14243f] bg-[#fafafa] pt-[9px] text-[12px] leading-3 text-[#444]">:</div>

    <div className="absolute top-[461px] left-[1539px] border border-[#767676] bg-white px-[7px] leading-6 whitespace-nowrap text-[#666] shadow-[4px_4px_3px_#8a8a8a]">
      Exclure ce quart de l'horaire.
    </div>

    <WeekWindow />
    <Callouts />
  </div>
);

export default App;
